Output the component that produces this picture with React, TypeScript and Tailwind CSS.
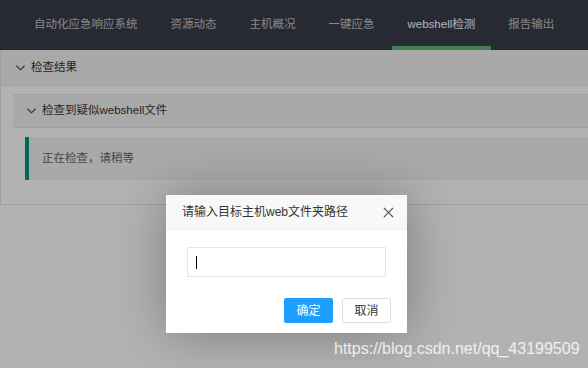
import React from "react";

const navItems = ["自动化应急响应系统", "资源动态", "主机概况", "一键应急", "webshell检测", "报告输出"];

function Chevron({ className }: { className?: string }) {
  return (
    <svg viewBox="0 0 10 6" className={className} fill="none" stroke="currentColor" strokeWidth="1.2">
      <polyline points="0.5,0.5 5,5 9.5,0.5" />
    </svg>
  );
}

export default function App() {
  return (
    <div
      className="relative w-[588px] h-[368px] overflow-hidden bg-white text-[12px]"
      style={{ fontFamily: '"Liberation Sans", "Noto Sans CJK SC", sans-serif' }}
    >
      {/* top nav */}
      <div className="h-[50px] bg-[#393D49] flex pl-[18px]">
        {navItems.map((item, i) => (
          <div
            key={item}
            className={
              "relative px-[16px] mr-[1px] flex items-center text-[11.5px] " +
              (i === 4 ? "text-white" : "text-white/70")
            }
          >
            {item}
            {i === 4 && <span className="absolute left-0 right-0 bottom-0 h-[4px] bg-[#5FB878]" />}
          </div>
        ))}
      </div>

      {/* result panel */}
      <div className="w-[620px] border border-t-0 border-[#e6e6e6]">
        <div className="h-[36px] bg-[#f2f2f2] flex items-center pl-[15px] text-[#333] border-b border-[#e6e6e6]">
          <Chevron className="w-[9px] h-[6px] mr-[6px] text-[#444]" />
          <span className="text-[11.5px]">检查结果</span>
        </div>
        <div className="pt-[8px] pb-[24px] pl-[12px]">
          <div className="h-[34px] bg-[#f2f2f2] flex items-center pl-[14px] text-[#333] border-y border-[#e6e6e6]">
            <Chevron className="w-[9px] h-[6px] mr-[6px] text-[#444]" />
            <span className="text-[11.5px]">检查到疑似webshell文件</span>
          </div>
          <div className="pt-[9px] pl-[12px]">
            <div className="h-[43px] bg-[#f2f2f2] border-l-[4px] border-[#009688] flex items-center pl-[13px] text-[#666] text-[11.5px]">
              正在检查，请稍等
            </div>
          </div>
        </div>
      </div>

      {/* shade */}
      <div className="absolute inset-0 bg-black/30" />

      {/* dialog */}
      <div className="absolute left-[166px] top-[195px] w-[241px] h-[138px] bg-white shadow-[1px_1px_50px_rgba(0,0,0,0.3)]">
        <div className="h-[35px] bg-[#f8f8f8] border-b border-[#eeeeee] flex items-center pl-[16px] pr-[13px] text-[#333]">
          <span className="flex-1 text-[12px]">请输入目标主机web文件夹路径</span>
          <svg viewBox="0 0 12 12" className="w-[11px] h-[11px] text-[#555]" fill="none" stroke="currentColor" strokeWidth="1.4">
            <line x1="1" y1="1" x2="11" y2="11" />
            <line x1="11" y1="1" x2="1" y2="11" />
          </svg>
        </div>
        <div className="px-[21px] pt-[17px]">
          <div className="h-[30px] border border-[#e6e6e6] flex items-center pl-[8px]">
            <span className="w-[1px] h-[13px] bg-black" />
          </div>
        </div>
        <div className="flex justify-end gap-[9px] pr-[16px] pt-[21px]">
          <div className="w-[49px] h-[25px] bg-[#1E9FFF] text-white flex items-center justify-center text-[12px] rounded-[2px]">
            确定
          </div>
          <div className="w-[49px] h-[25px] bg-white border border-[#dedede] text-[#333] flex items-center justify-center text-[12px] rounded-[2px]">
            取消
          </div>
        </div>
      </div>

      {/* watermark */}
      <div className="absolute left-[334px] top-[339px] text-[16px] text-white/80 leading-[20px]">
        https://blog.csdn.net/qq_43199509
      </div>
    </div>
  );
}
